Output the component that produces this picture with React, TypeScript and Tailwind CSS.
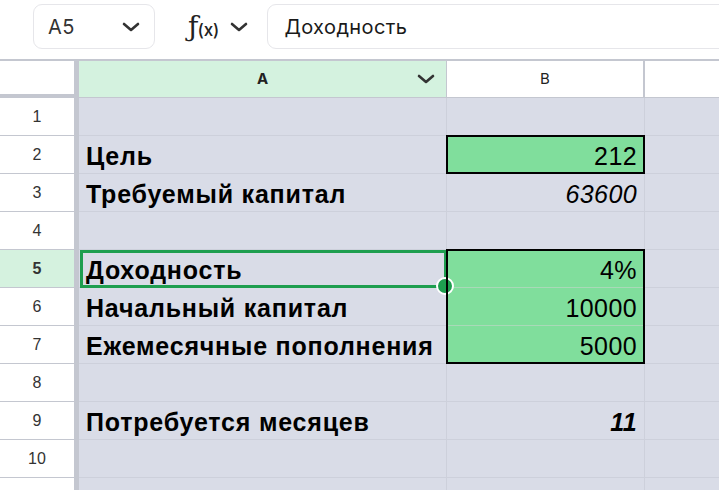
import React from "react";

const Chevron = ({ className = "" }: { className?: string }) => (
  <svg className={className} width="18" height="10" viewBox="0 0 18 10" fill="none">
    <path d="M2 2 L9 8 L16 2" stroke="#333" strokeWidth="2.6" strokeLinecap="round" strokeLinejoin="round" />
  </svg>
);

type Row = {
  n: number;
  a?: string;
  b?: string;
  bStyle?: "italic" | "bolditalic";
  green?: boolean;
};

const rows: Row[] = [
  { n: 1 },
  { n: 2, a: "Цель", b: "212", green: true },
  { n: 3, a: "Требуемый капитал", b: "63600", bStyle: "italic" },
  { n: 4 },
  { n: 5, a: "Доходность", b: "4%", green: true },
  { n: 6, a: "Начальный капитал", b: "10000", green: true },
  { n: 7, a: "Ежемесячные пополнения", b: "5000", green: true },
  { n: 8 },
  { n: 9, a: "Потребуется месяцев", b: "11", bStyle: "bolditalic" },
  { n: 10 },
  { n: 11 },
];

export default function App() {
  return (
    <div className="w-[719px] h-[490px] overflow-hidden bg-white" style={{ fontFamily: "Inter, 'Noto Sans', sans-serif" }}>
      {/* Toolbar */}
      <div className="h-[59px] flex items-start pt-[4px] pl-[33px]">
        <div className="w-[122px] h-[45px] border border-[#e6e6ea] rounded-[9px] flex items-center justify-between pl-[14px] pr-[14px] shrink-0">
          <span className="text-[20px] tracking-[0.4px] text-[#333]">A5</span>
          <Chevron />
        </div>
        <div className="flex items-center h-[45px] ml-[33px] shrink-0">
          <span className="text-[#222] leading-none flex items-baseline font-medium">
            <span className="text-[28px]" style={{ fontFamily: "'DejaVu Serif', serif" }}>ƒ</span>
            <span className="text-[17px] -ml-[1px]">(x)</span>
          </span>
          <Chevron className="ml-[11px]" />
        </div>
        <div className="ml-[19px] w-[470px] h-[45px] border border-[#e6e6ea] rounded-[9px] flex items-center pl-[16px] shrink-0">
          <span className="text-[20px] tracking-[0.4px] text-[#1a1a1a]">Доходность</span>
        </div>
      </div>

      {/* Grid */}
      <div className="border-t-2 border-[#c4c7d0] grid grid-cols-[79px_368px_198px_1fr]">
        {/* Header */}
        <div className="h-[37px] bg-white border-r-[5px] border-b-[4px] border-[#c4c7d0]" />
        <div className="h-[37px] bg-[#d4f2df] border-r border-b border-[#c4c7d0] flex items-center justify-center relative">
          <span className="text-[15px] font-bold text-[#222]">A</span>
          <Chevron className="absolute right-[11px] top-[13px]" />
        </div>
        <div className="h-[37px] bg-white border-r-2 border-b border-[#c4c7d0] flex items-center justify-center">
          <span className="text-[15px] text-[#222]">B</span>
        </div>
        <div className="h-[37px] bg-white border-b border-[#c4c7d0]" />

        {rows.map((r) => {
          const sel = r.n === 5;
          return (
            <React.Fragment key={r.n}>
              <div
                className={`h-[38px] border-r-[5px] border-b border-[#c4c7d0] flex items-center justify-center text-[16px] text-[#333] ${
                  sel ? "bg-[#d5f2df] font-bold" : "bg-white"
                }`}
                style={{ fontFamily: "'Liberation Sans', Arial, sans-serif" }}
              >
                {r.n}
              </div>
              <div
                className="h-[38px] bg-[#d9dce7] border-r border-b border-[#cdd0db] flex items-center pl-[7px] pt-[4px] relative"
                style={{ fontFamily: "'Liberation Sans', Arial, sans-serif" }}
              >
                {r.a && (
                  <span className="text-[25px] font-bold tracking-[0.8px] text-black leading-none whitespace-nowrap">
                    {r.a}
                  </span>
                )}
                {sel && (
                  <div className="absolute left-[1px] top-0 -right-px -bottom-px border-[3px] border-[#1e9e4f] z-10">
                    <div className="absolute -right-[10px] -bottom-[10px] w-[18px] h-[18px] rounded-full bg-[#1e9e4f] border-2 border-white" />
                  </div>
                )}
              </div>
              <div
                className={`h-[38px] border-r border-b flex items-center justify-end pr-[7px] pt-[4px] relative ${
                  r.green ? "bg-[#80de9c] border-[#a9d9b8]" : "bg-[#d9dce7] border-[#cdd0db]"
                }`}
                style={{ fontFamily: "'Liberation Sans', Arial, sans-serif" }}
              >
                {r.b && (
                  <span
                    className={`text-[25px] tracking-[0.4px] text-black leading-none relative z-[1] ${
                      r.bStyle === "italic" ? "italic" : r.bStyle === "bolditalic" ? "italic font-bold" : ""
                    }`}
                  >
                    {r.b}
                  </span>
                )}
                {r.n === 2 && <div className="absolute -inset-px border-2 border-black z-10" />}
                {r.n === 5 && <div className="absolute -top-px -left-px -right-px h-[115px] border-2 border-black z-10" />}
              </div>
              <div className="h-[38px] bg-[#d9dce7] border-b border-[#cdd0db]" />
            </React.Fragment>
          );
        })}
      </div>
    </div>
  );
}
